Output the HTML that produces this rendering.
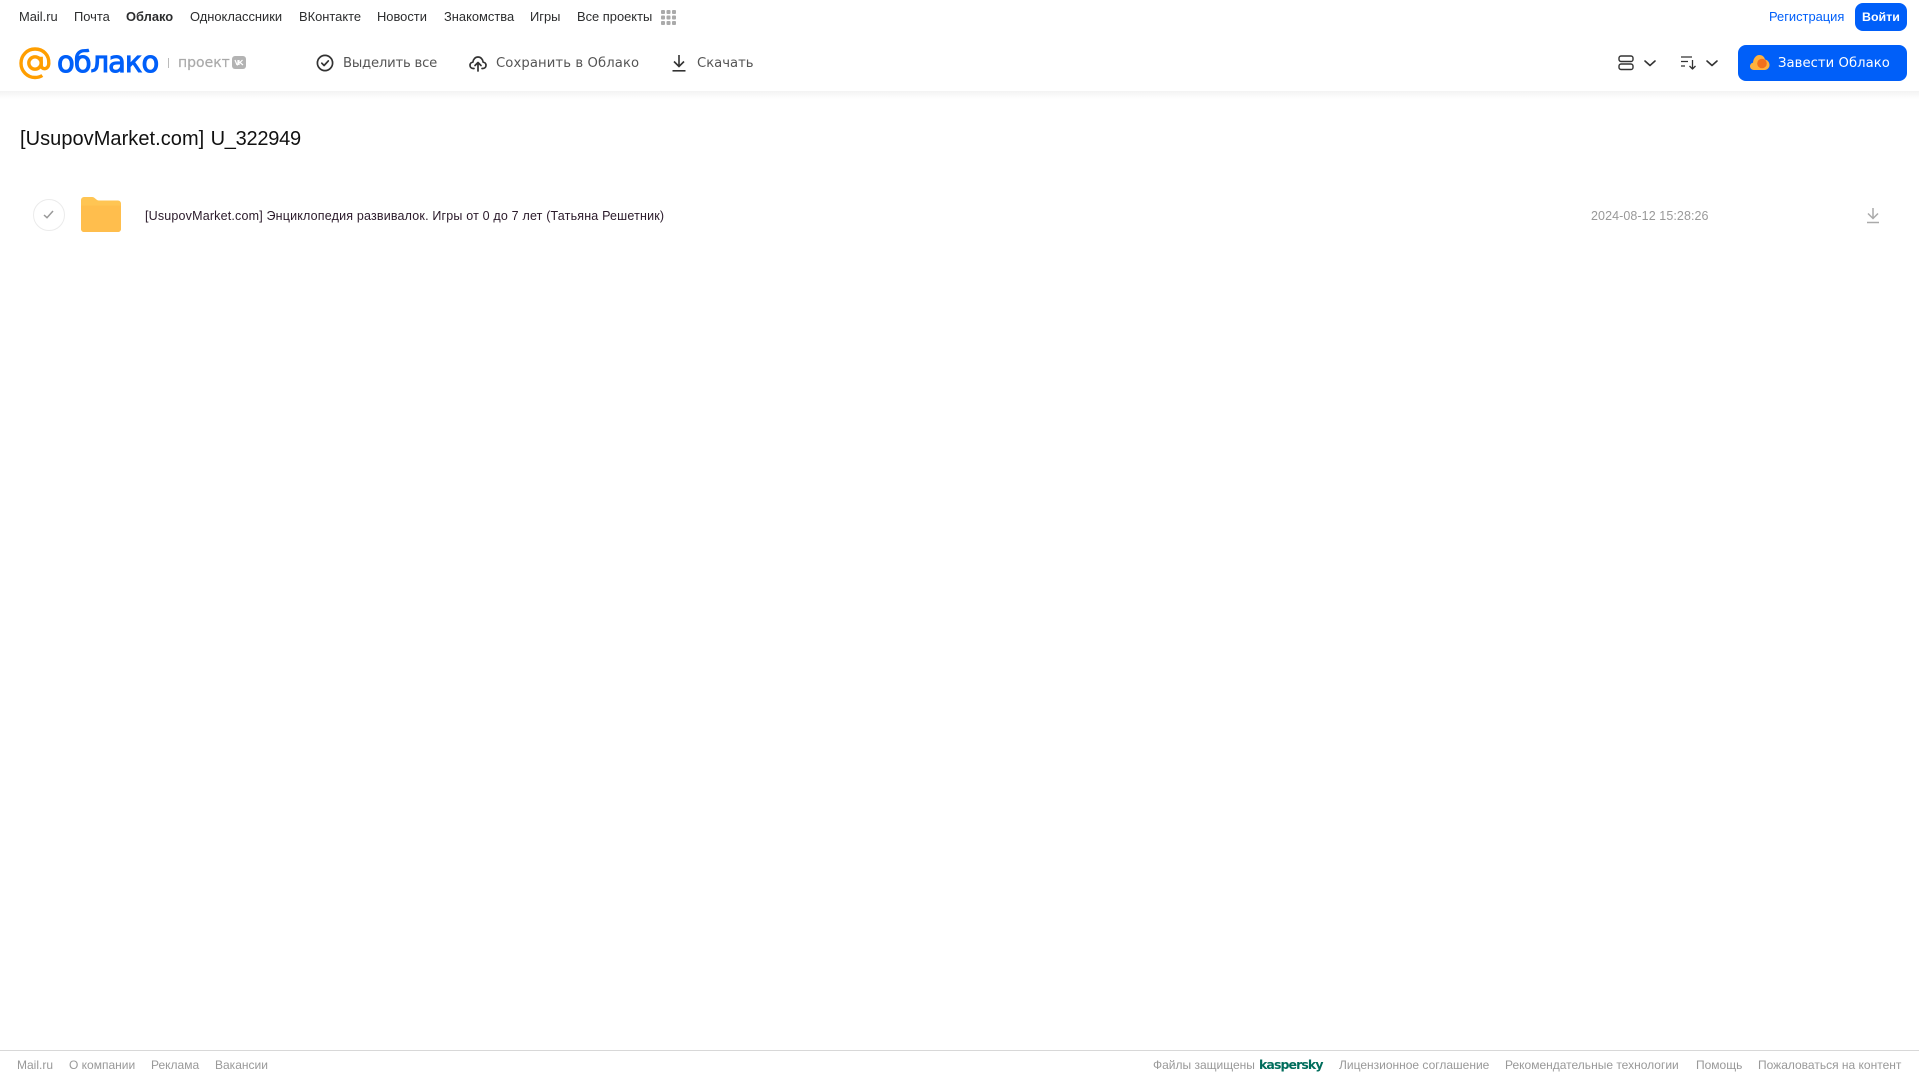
<!DOCTYPE html>
<html lang="ru"><head><meta charset="utf-8"><title>Облако</title>
<style>
html,body{margin:0;padding:0;background:#fff;width:1919px;height:1079px;overflow:hidden}
body{position:relative;font-family:"Liberation Sans","DejaVu Sans",sans-serif;color:#333}
.t{position:absolute;white-space:nowrap;line-height:16px}
.n{font-size:12.9px;top:9px;color:#2c2d2e}
.a{top:56px;color:#555;font-family:"DejaVu Sans","Liberation Sans",sans-serif;font-size:13.2px;letter-spacing:.1px}
.f{font-size:12px;top:1057px;color:#999}
svg{position:absolute;overflow:visible}
#shadow{position:absolute;left:0;top:91px;width:1919px;height:8px;background:linear-gradient(#f3f3f3,#fff)}
</style></head><body>
<div id="shadow"></div>

<span class="t n" style="left:19px">Mail.ru</span>
<span class="t n" style="left:74px">Почта</span>
<span class="t n" style="left:126px;font-weight:bold">Облако</span>
<span class="t n" style="left:190px">Одноклассники</span>
<span class="t n" style="left:299px">ВКонтакте</span>
<span class="t n" style="left:377px">Новости</span>
<span class="t n" style="left:444px">Знакомства</span>
<span class="t n" style="left:530px">Игры</span>
<span class="t n" style="left:577px">Все проекты</span>
<svg style="left:661px;top:10px" width="15" height="15" fill="#aaa"><rect width="4" height="4" rx="1"/><rect x="5.5" width="4" height="4" rx="1"/><rect x="11" width="4" height="4" rx="1"/><rect y="5.5" width="4" height="4" rx="1"/><rect x="5.5" y="5.5" width="4" height="4" rx="1"/><rect x="11" y="5.5" width="4" height="4" rx="1"/><rect y="11" width="4" height="4" rx="1"/><rect x="5.5" y="11" width="4" height="4" rx="1"/><rect x="11" y="11" width="4" height="4" rx="1"/></svg>

<span class="t n" style="left:1769px;color:#005ff9">Регистрация</span>
<div style="position:absolute;left:1855px;top:3px;width:52px;height:28px;background:#005ff9;border-radius:8px"></div>
<span class="t n" style="left:1862px;color:#fff;font-weight:bold;font-size:12.4px">Войти</span>

<svg style="left:19px;top:47px" width="33" height="33" viewBox="0 0 33 33" fill="none" stroke="#ff9e00" stroke-width="3.4"><circle cx="16" cy="16" r="6.2"/><path d="M22.2 9.800v8.200c0 5.200 7.200 5.200 7.600-1.500.5-8.500-5.600-14.500-13.800-14.500C8.200 2 2 8.300 2 16.200S8.200 30.500 16 30.500c3 0 5.300-.7 7.300-2"/></svg>
<span class="t" style="left:57px;top:44px;line-height:36px;font-size:29px;color:#005ff9;font-family:'DejaVu Sans',sans-serif;letter-spacing:-1px;-webkit-text-stroke:1px #005ff9">облако</span>
<div style="position:absolute;left:168px;top:58px;width:1px;height:10px;background:#bbb"></div>
<span class="t" style="left:178px;top:55px;font-size:14px;color:#aaa;font-family:'DejaVu Sans',sans-serif;letter-spacing:0;-webkit-text-stroke:.2px #aaa">проект</span>
<svg style="left:232px;top:56px" width="14" height="13"><rect width="14" height="13" rx="3" fill="#b3b3b3"/><path d="M3 4l2 5M5 9c1 0 1-1 1-5M7 4v5M10.500 4L8 6.500l3 2.500" stroke="#fff" stroke-width="1.200" fill="none"/></svg>

<svg style="left:316px;top:54px" width="18" height="18" fill="none" stroke="#333" stroke-width="1.700"><circle cx="9" cy="9" r="7.600"/><path d="M5.800 9.200l2.300 2.300 4.200-4.600" stroke-linecap="round" stroke-linejoin="round"/></svg>
<span class="t a" style="left:343px;letter-spacing:-.2px">Выделить все</span>
<svg style="left:469px;top:54px" width="18" height="18" fill="none" stroke="#333" stroke-width="1.700" stroke-linecap="round" stroke-linejoin="round"><path d="M5 14.500H4.300C2.300 14.500 1 13 1 11.300 1 9.500 2.300 8.300 3.800 8.200 4.300 5 6.500 3 9 3s4.700 2 5.200 5.200c1.500.1 2.800 1.300 2.800 3.100 0 1.700-1.300 3.200-3.300 3.200H13"/><path d="M9 17V9M6 11.500L9 8.500l3 3"/></svg>
<span class="t a" style="left:496px">Сохранить в Облако</span>
<svg style="left:671px;top:54px" width="16" height="18" fill="none" stroke="#333" stroke-width="1.600"><path d="M8 1v11M3 7.500L8 12.500l5-5"/><path d="M1.500 16.800h13"/></svg>
<span class="t a" style="left:697px;letter-spacing:0">Скачать</span>

<svg style="left:1618px;top:55px" width="16" height="16" fill="none" stroke="#333" stroke-width="1.400"><rect x="1" y="1" width="14" height="5.500" rx="2"/><rect x="1" y="9" width="14" height="5.500" rx="2"/></svg>
<svg style="left:1644px;top:60px" width="12" height="7" fill="none" stroke="#333" stroke-width="1.600" stroke-linecap="round" stroke-linejoin="round"><path d="M1 1l5 4.500L11 1"/></svg>
<svg style="left:1681px;top:56px" width="16" height="14" fill="none" stroke="#333" stroke-width="1.300"><path d="M0 1h11M0 5.500h7M0 10h4"/><path d="M11.500 4v9M8.500 10l3 3 3-3" stroke-linejoin="round"/></svg>
<svg style="left:1706px;top:60px" width="12" height="7" fill="none" stroke="#333" stroke-width="1.600" stroke-linecap="round" stroke-linejoin="round"><path d="M1 1l5 4.500L11 1"/></svg>

<div style="position:absolute;left:1738px;top:45px;width:169px;height:36px;background:#005ff9;border-radius:8px"></div>
<svg style="left:1750px;top:54px" width="20" height="17"><path d="M4 16C1.500 16 0 14.200 0 12.300 0 10.500 1.200 9 3 8.700 3.300 5 5.500 1 9.500 1c3 0 5 2 5.500 4.500 2.700.5 4.500 2.900 4.500 5.500 0 2.800-2.200 5-5 5z" fill="#ffb13d"/><circle cx="12" cy="9.500" r="4.800" fill="#f2701d"/></svg>
<span class="t a" style="left:1778px;color:#fff;letter-spacing:.05px">Завести Облако</span>

<span class="t" style="left:20px;top:127px;line-height:24px;font-size:20px;color:#111"><span style="letter-spacing:.05px">[UsupovMarket.com]</span><span style="margin-left:1px;letter-spacing:-.25px"> U_322949</span></span>

<div style="position:absolute;left:33px;top:199px;width:30px;height:30px;border:1px solid #ebebeb;border-radius:50%"></div>
<svg style="left:43px;top:210px" width="11" height="9" fill="none" stroke="#999" stroke-width="1.500"><path d="M1 5l3 2.700L10 1"/></svg>
<svg style="left:81px;top:197px" width="40" height="35"><path d="M0 3a3 3 0 0 1 3-3h8c3 0 4 3.500 7 3.500h19a3 3 0 0 1 3 3V32a3 3 0 0 1-3 3H3a3 3 0 0 1-3-3z" fill="#ffc553"/><path d="M0 8.500h40V32a3 3 0 0 1-3 3H3a3 3 0 0 1-3-3z" fill="#ffbe4d"/></svg>
<span class="t" style="left:145px;top:208px;font-size:12.5px;letter-spacing:.18px;color:#2a1a2a">[UsupovMarket.com] Энциклопедия развивалок. Игры от 0 до 7 лет (Татьяна Решетник)</span>
<span class="t" style="left:1591px;top:208px;font-size:12.5px;letter-spacing:.08px;color:#999">2024-08-12 15:28:26</span>
<svg style="left:1866px;top:207px" width="14" height="17" fill="none" stroke="#aaa" stroke-width="1.500"><path d="M7 1v10M2 6.500L7 11.500l5-5"/><path d="M1 15.500h12"/></svg>

<div style="position:absolute;left:0;top:1050px;width:1919px;height:1px;background:#d8d8d8"></div>
<span class="t f" style="left:17px">Mail.ru</span>
<span class="t f" style="left:69px">О компании</span>
<span class="t f" style="left:151px">Реклама</span>
<span class="t f" style="left:215px">Вакансии</span>
<span class="t f" style="left:1153px">Файлы защищены</span>
<span class="t" style="left:1259px;top:1057px;font-size:12.5px;font-weight:bold;color:#006d5c;font-family:'DejaVu Sans',sans-serif;letter-spacing:-.9px">kaspersky</span>
<span class="t f" style="left:1339px">Лицензионное соглашение</span>
<span class="t f" style="left:1505px">Рекомендательные технологии</span>
<span class="t f" style="left:1696px">Помощь</span>
<span class="t f" style="left:1758px">Пожаловаться на контент</span>
</body></html>
